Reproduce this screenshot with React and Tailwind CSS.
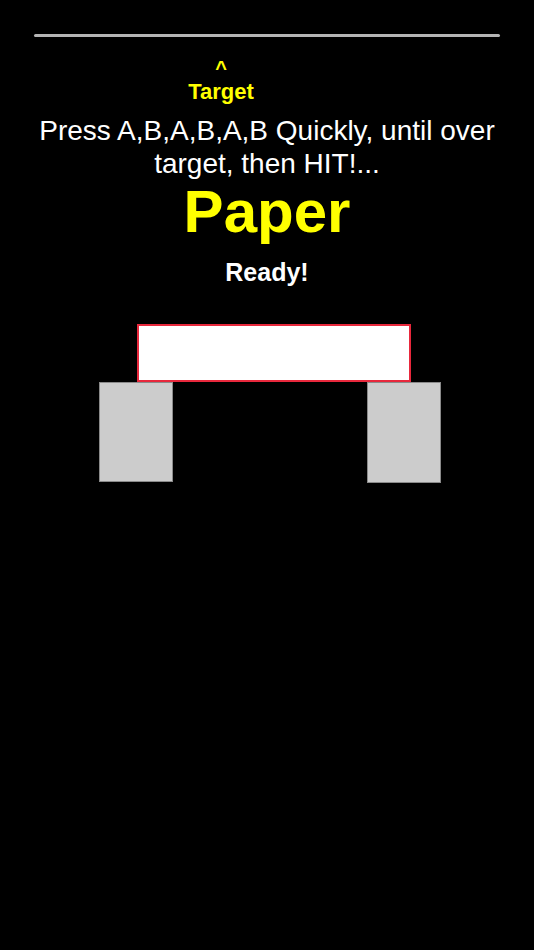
export default function App() {
  return (
    <div className="min-h-[950px] w-[534px] bg-black font-['Liberation_Sans',Arial,sans-serif] text-white">
      <div className="pt-[34px]">
        <div className="mx-[34px] h-[3px] rounded-full bg-[#b4b4b4]" />
      </div>

      <div className="mt-[22px] ml-[157px] flex w-[128px] flex-col items-center gap-[2px] font-bold text-[#ffff00]">
        <span className="text-[20px] leading-[18px]">^</span>
        <span className="text-[22px] leading-[26px]">Target</span>
      </div>

      <p className="mt-[9px] px-[20px] text-center text-[28px] leading-[33px] text-white">
        Press A,B,A,B,A,B Quickly, until over target, then HIT!...
      </p>

      <h1 className="mt-[1px] text-center text-[60px] font-bold leading-[62px] text-[#ffff00]">Paper</h1>

      <p className="mt-[15px] text-center text-[25px] font-bold leading-[28px]">Ready!</p>

      <div className="mt-[38px] ml-[137px] h-[58px] w-[274px] border-2 border-[#e8283c] bg-white" />

      <div className="flex">
        <div className="ml-[99px] h-[100px] w-[74px] border border-[#8a8a8a] bg-[#cccccc]" />
        <div className="ml-[194px] h-[101px] w-[74px] border border-[#8a8a8a] bg-[#cccccc]" />
      </div>
    </div>
  )
}
